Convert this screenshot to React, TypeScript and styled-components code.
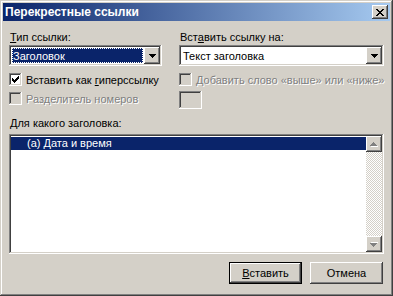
import React from "react";
import styled, { createGlobalStyle } from "styled-components";

const Global = createGlobalStyle`
  html, body { margin: 0; padding: 0; background: #d4d0c8; }
  body { font-family: "Liberation Sans", Arial, sans-serif; font-size: 11px; }
`;

const FACE = "#d4d0c8";
const raised = `inset -1px -1px #404040, inset 1px 1px ${FACE}, inset -2px -2px #808080, inset 2px 2px #fff`;
const btnRaised = `inset -1px -1px #404040, inset 1px 1px #fff, inset -2px -2px #808080, inset 2px 2px ${FACE}`;
const sunken = `inset -1px -1px #fff, inset 1px 1px #808080, inset -2px -2px ${FACE}, inset 2px 2px #404040`;

const Window = styled.div`
  width: 393px;
  height: 296px;
  box-sizing: border-box;
  background: ${FACE};
  box-shadow: ${raised};
  padding: 3px;
  display: flex;
  flex-direction: column;
  color: #000;
  font-family: "Liberation Sans", Arial, sans-serif;
  font-size: 11px;
`;

const TitleBar = styled.div`
  height: 18px;
  display: flex;
  align-items: center;
  justify-content: space-between;
  background: linear-gradient(to right, #0a246a, #a6caf0);
  padding: 0 2px 0 2px;
`;

const TitleText = styled.span`
  color: #fff;
  font-weight: bold;
  font-size: 12px;
  letter-spacing: 0;
`;

const CloseBtn = styled.div`
  width: 16px;
  height: 14px;
  background: ${FACE};
  box-shadow: ${btnRaised};
  display: flex;
  align-items: center;
  justify-content: center;
`;

const Body = styled.div`
  flex: 1;
  display: flex;
  flex-direction: column;
  padding: 0 6px;
`;

const TopGrid = styled.div`
  display: grid;
  grid-template-columns: 153px 205px;
  column-gap: 17px;
  margin-top: 10px;
`;

const Column = styled.div`
  display: flex;
  flex-direction: column;
`;

const Label = styled.div<{ $mt?: number }>`
  height: 13px;
  line-height: 13px;
  margin-top: ${(p) => p.$mt ?? 0}px;
  white-space: nowrap;
  padding-left: 1px;
`;

const U = styled.span`
  text-decoration: underline;
`;

const Combo = styled.div`
  margin-top: 1px;
  height: 21px;
  box-sizing: border-box;
  background: #fff;
  box-shadow: ${sunken};
  padding: 2px;
  display: flex;
`;

const ComboValue = styled.div<{ $selected?: boolean }>`
  flex: 1;
  margin: 1px;
  display: flex;
  align-items: center;
  padding-left: 1px;
  white-space: nowrap;
  background: ${(p) => (p.$selected ? "#0a246a" : "transparent")};
  color: ${(p) => (p.$selected ? "#fff" : "#000")};
  outline: ${(p) => (p.$selected ? "1px dotted #fff" : "none")};
  outline-offset: -1px;
`;

const DropBtn = styled.div`
  width: 16px;
  background: ${FACE};
  box-shadow: ${btnRaised};
  display: flex;
  align-items: center;
  justify-content: center;
`;

const CheckRow = styled.div<{ $mt: number; $disabled?: boolean }>`
  display: flex;
  align-items: center;
  margin-top: ${(p) => p.$mt}px;
  height: 13px;
  gap: 4px;
  white-space: nowrap;
  color: ${(p) => (p.$disabled ? "#808080" : "#000")};
  text-shadow: ${(p) => (p.$disabled ? "1px 1px #fff" : "none")};
`;

const Box = styled.div<{ $disabled?: boolean }>`
  width: 13px;
  height: 13px;
  flex: none;
  background: ${(p) => (p.$disabled ? FACE : "#fff")};
  box-shadow: ${sunken};
  display: flex;
`;

const SmallField = styled.div`
  margin-top: 5px;
  width: 23px;
  height: 18px;
  background: ${FACE};
  box-shadow: ${sunken};
`;

const ListBox = styled.div`
  margin-top: 4px;
  height: 120px;
  box-sizing: border-box;
  background: #fff;
  box-shadow: ${sunken};
  padding: 2px;
  display: flex;
`;

const ListItems = styled.div`
  flex: 1;
  display: flex;
  flex-direction: column;
`;

const ListItem = styled.div<{ $selected?: boolean }>`
  height: 13px;
  line-height: 13px;
  padding-left: 16px;
  background: ${(p) => (p.$selected ? "#0a246a" : "transparent")};
  color: ${(p) => (p.$selected ? "#fff" : "#000")};
  margin-top: 1px;
`;

const ScrollBar = styled.div`
  width: 16px;
  display: flex;
  flex-direction: column;
  background: repeating-conic-gradient(#fff 0 25%, ${FACE} 0 50%) 0 0 / 2px 2px;
`;

const ScrollBtn = styled.div`
  height: 16px;
  background: ${FACE};
  box-shadow: ${btnRaised};
  display: flex;
  align-items: center;
  justify-content: center;
`;

const ScrollTrack = styled.div`
  flex: 1;
`;

const ButtonRow = styled.div`
  margin-top: 8px;
  display: flex;
  justify-content: flex-end;
  gap: 8px;
  padding-right: 1px;
`;

const Button = styled.div<{ $default?: boolean }>`
  width: 73px;
  height: 22px;
  box-sizing: border-box;
  background: ${FACE};
  border: ${(p) => (p.$default ? "1px solid #000" : "none")};
  box-shadow: ${btnRaised};
  display: flex;
  align-items: center;
  justify-content: center;
`;

const Check = () => (
  <svg width="13" height="13" viewBox="0 0 13 13" shapeRendering="crispEdges">
    <path
      fill="#000"
      d="M3 5h1v3H3z M4 6h1v3H4z M5 7h1v3H5z M6 6h1v3H6z M7 5h1v3H7z M8 4h1v3H8z M9 3h1v3H9z"
    />
  </svg>
);

const DownArrow = () => (
  <svg width="7" height="4" viewBox="0 0 7 4" shapeRendering="crispEdges">
    <path fill="#000" d="M0 0h7v1H0z M1 1h5v1H1z M2 2h3v1H2z M3 3h1v1H3z" />
  </svg>
);

const ScrollArrow = ({ up }: { up?: boolean }) => (
  <svg width="8" height="5" viewBox="0 0 8 5" shapeRendering="crispEdges">
    <g transform={up ? "" : "translate(0 5) scale(1 -1)"}>
      <path fill="#fff" d="M4 1h1v1H4z M3 2h3v1H3z M2 3h5v1H2z M1 4h7v1H1z" />
      <path fill="#808080" d="M3 0h1v1H3z M2 1h3v1H2z M1 2h5v1H1z M0 3h7v1H0z" />
    </g>
  </svg>
);

const CloseGlyph = () => (
  <svg width="8" height="7" viewBox="0 0 8 7" shapeRendering="crispEdges">
    <path
      fill="#000"
      d="M0 0h2v1H0z M6 0h2v1H6z M1 1h2v1H1z M5 1h2v1H5z M2 2h4v1H2z M3 3h2v1H3z M2 4h4v1H2z M1 5h2v1H1z M5 5h2v1H5z M0 6h2v1H0z M6 6h2v1H6z"
    />
  </svg>
);

export default function App() {
  return (
    <>
      <Global />
      <Window>
        <TitleBar>
          <TitleText>Перекрестные ссылки</TitleText>
          <CloseBtn>
            <CloseGlyph />
          </CloseBtn>
        </TitleBar>
        <Body>
          <TopGrid>
            <Column>
              <Label>
                <U>Т</U>ип ссылки:
              </Label>
              <Combo>
                <ComboValue $selected>Заголовок</ComboValue>
                <DropBtn>
                  <DownArrow />
                </DropBtn>
              </Combo>
              <CheckRow $mt={7}>
                <Box>
                  <Check />
                </Box>
                <span>
                  Вставить как <U>г</U>иперссылку
                </span>
              </CheckRow>
              <CheckRow $mt={6} $disabled>
                <Box $disabled />
                <span>Разделитель номеров</span>
              </CheckRow>
            </Column>
            <Column>
              <Label>
                Вст<U>а</U>вить ссылку на:
              </Label>
              <Combo>
                <ComboValue>Текст заголовка</ComboValue>
                <DropBtn>
                  <DownArrow />
                </DropBtn>
              </Combo>
              <CheckRow $mt={7} $disabled>
                <Box $disabled />
                <span>Добавить слово «выше» или «ниже»</span>
              </CheckRow>
              <SmallField />
            </Column>
          </TopGrid>
          <Label $mt={8}>
            <U>Д</U>ля какого заголовка:
          </Label>
          <ListBox>
            <ListItems>
              <ListItem $selected>(а) Дата и время</ListItem>
            </ListItems>
            <ScrollBar>
              <ScrollBtn>
                <ScrollArrow up />
              </ScrollBtn>
              <ScrollTrack />
              <ScrollBtn>
                <ScrollArrow />
              </ScrollBtn>
            </ScrollBar>
          </ListBox>
          <ButtonRow>
            <Button $default>
              <span>
                <U>В</U>ставить
              </span>
            </Button>
            <Button>Отмена</Button>
          </ButtonRow>
        </Body>
      </Window>
    </>
  );
}
